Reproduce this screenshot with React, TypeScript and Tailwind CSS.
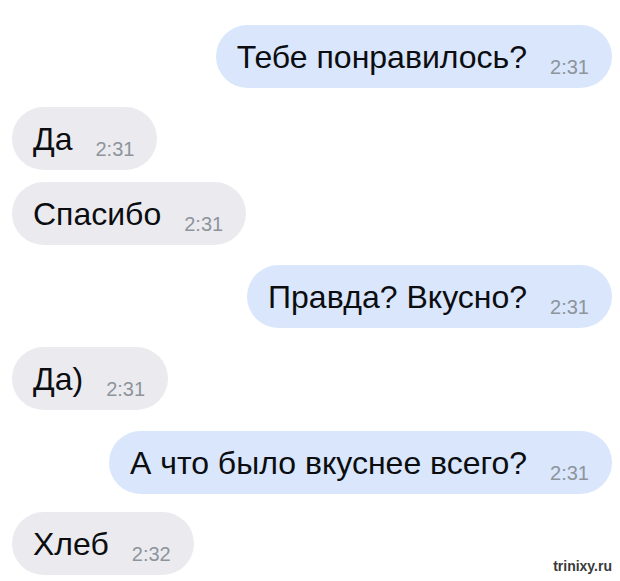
import React from "react";

type Msg = { text: string; time: string; out: boolean; mt: string };

const msgs: Msg[] = [
  { text: "Тебе понравилось?", time: "2:31", out: true, mt: "mt-[25px]" },
  { text: "Да", time: "2:31", out: false, mt: "mt-[19px]" },
  { text: "Спасибо", time: "2:31", out: false, mt: "mt-[12px]" },
  { text: "Правда? Вкусно?", time: "2:31", out: true, mt: "mt-[20px]" },
  { text: "Да)", time: "2:31", out: false, mt: "mt-[19px]" },
  { text: "А что было вкуснее всего?", time: "2:31", out: true, mt: "mt-[21px]" },
];

function Bubble({ text, time, out }: { text: string; time: string; out: boolean }) {
  return (
    <div
      className={
        "flex h-[63px] items-center rounded-full pl-[21px] pr-[23px] " +
        (out ? "bg-[#d9e6fb]" : "bg-[#ebebef]")
      }
    >
      <span className="text-[32px] leading-none text-[#0b0d10] whitespace-nowrap">{text}</span>
      <span className="ml-[23px] mt-[20px] text-[20px] leading-none text-[#8d949c]">{time}</span>
    </div>
  );
}

export default function App() {
  return (
    <div
      className="flex h-[581px] w-[620px] flex-col overflow-hidden bg-white pl-[12px] pr-[8px]"
      style={{ fontFamily: '"Liberation Sans", Arial, sans-serif' }}
    >
      {msgs.map((m, i) => (
        <div key={i} className={"flex " + m.mt + " " + (m.out ? "justify-end" : "justify-start")}>
          <Bubble text={m.text} time={m.time} out={m.out} />
        </div>
      ))}
      <div className="mt-[18px] flex items-end justify-between">
        <Bubble text="Хлеб" time="2:32" out={false} />
        <span className="mb-[2px] text-[14px] font-bold leading-none text-[#3a3a3a] [text-shadow:0_0_1px_#fff]">
          trinixy.ru
        </span>
      </div>
    </div>
  );
}
